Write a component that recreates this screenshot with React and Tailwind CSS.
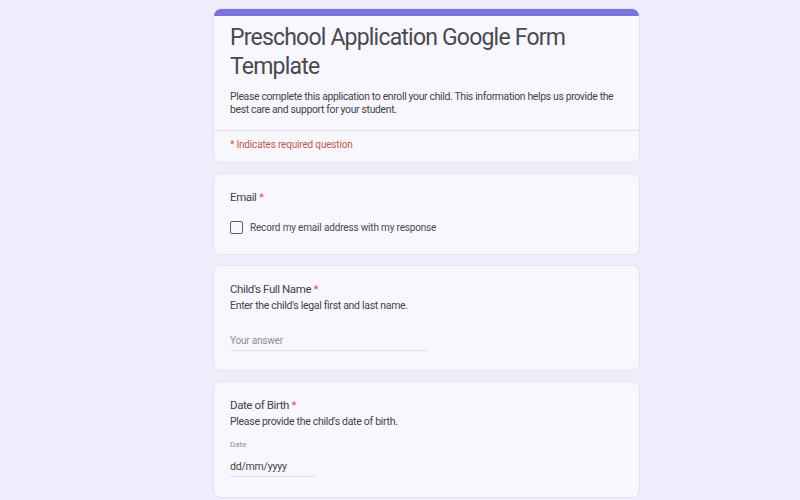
export default function App() {
  const font = { fontFamily: "Roboto, 'Noto Sans', Arial, sans-serif" };
  return (
    <div className="h-[500px] w-[800px] overflow-hidden bg-[#efedfb] pt-[8px]" style={font}>
      <div className="ml-[213px] flex w-[427px] flex-col gap-[10px]">
        <div className="overflow-hidden rounded-[8px] border border-[#e4e2f0] bg-[#f8f7fd]">
          <div className="h-[7px] bg-[#7b73d9]" />
          <div className="pl-[16px] pr-[8px] pt-[7px] pb-[14px]">
            <h1 className="text-[23px] leading-[29px] tracking-[-0.8px] text-[#4a4951]">
              Preschool Application Google Form Template
            </h1>
            <p className="mt-[9px] text-[10.4px] leading-[13px] tracking-[-0.33px] text-[#43424a]">
              Please complete this application to enroll your child. This information helps us provide the best care and support for your student.
            </p>
          </div>
          <div className="border-t border-[#e2e0ec] px-[16px] pt-[8px] pb-[11px] text-[10px] leading-[12px] tracking-[-0.17px] text-[#c5564f]">
            * Indicates required question
          </div>
        </div>

        <div className="h-[82px] rounded-[8px] border border-[#e4e2f0] bg-[#f8f7fd] px-[16px] pt-[16px]">
          <div className="text-[11.5px] leading-[14px] tracking-[-0.4px] text-[#43424a]">
            Email <span className="text-[#d0534a]">*</span>
          </div>
          <div className="mt-[17px] flex items-center gap-[7px]">
            <div className="h-[13px] w-[13px] rounded-[2px] border-[1.5px] border-[#5c5b64]" />
            <span className="text-[10px] leading-[12px] tracking-[-0.17px] text-[#4a4951]">Record my email address with my response</span>
          </div>
        </div>

        <div className="h-[106px] rounded-[8px] border border-[#e4e2f0] bg-[#f8f7fd] px-[16px] pt-[16px]">
          <div className="text-[11.5px] leading-[14px] tracking-[-0.4px] text-[#43424a]">
            Child's Full Name <span className="text-[#d0534a]">*</span>
          </div>
          <div className="mt-[3px] text-[10.5px] leading-[13px] tracking-[-0.3px] text-[#43424a]">
            Enter the child's legal first and last name.
          </div>
          <div className="mt-[23px] w-[197px] border-b border-[#e2e0ec] pb-[3px] text-[10px] leading-[12px] tracking-[-0.2px] text-[#8e8d96]">
            Your answer
          </div>
        </div>

        <div className="h-[117px] rounded-[8px] border border-[#e4e2f0] bg-[#f8f7fd] px-[16px] pt-[16px]">
          <div className="text-[11.5px] leading-[14px] tracking-[-0.4px] text-[#43424a]">
            Date of Birth <span className="text-[#d0534a]">*</span>
          </div>
          <div className="mt-[3px] text-[10.5px] leading-[13px] tracking-[-0.3px] text-[#43424a]">
            Please provide the child's date of birth.
          </div>
          <div className="mt-[12px] text-[8px] leading-[10px] text-[#8e8d96]">Date</div>
          <div className="mt-[10px] w-[86px] border-b border-[#e2e0ec] pb-[3px] text-[10.5px] leading-[13px] tracking-[-0.2px] text-[#43424a]">
            dd/mm/yyyy
          </div>
        </div>
      </div>
    </div>
  );
}
